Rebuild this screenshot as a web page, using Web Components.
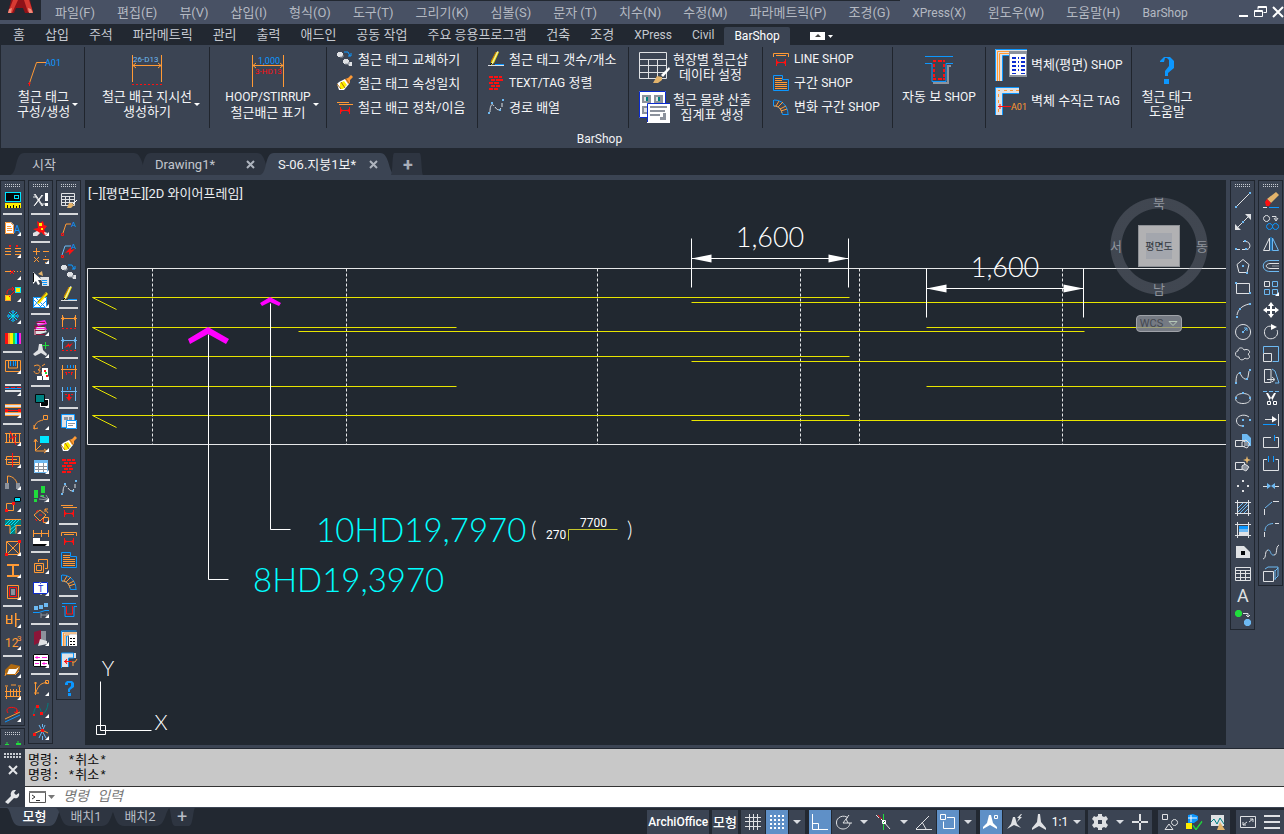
<!DOCTYPE html>
<html lang="ko">
<head>
<meta charset="utf-8">
<title>BarShop</title>
<style>
    :root {
        --panel: #3b4453;
        --dark: #222831;
        --tab: #2e3541;
        --text: #d9dce1;
        --active: #5f90c7;
    }
    html, body { height: 100%; }
    body {
        margin: 0;
        display: flex;
        flex-direction: column;
        overflow: hidden;
        background: var(--dark);
        color: var(--text);
        font: 13px/15px Roboto, "Noto Sans CJK KR", sans-serif;
    }
    .latin { font-size: 12px; }
    .file-tabs {
        display: flex;
        height: 22px;
        padding: 5px 0 0 16px;
        border-bottom: 5px solid var(--panel);
    }
    main {
        flex: 1;
        min-height: 0;
        display: flex;
        background: var(--panel);
        border-bottom: 3px solid var(--panel);
    }
    .dock { display: flex; gap: 3px; padding-right: 4px; }
    .dock > div { display: flex; flex-direction: column; gap: 2px; overflow: hidden; }
    .dock.right { padding: 0 1px 0 4px; }
    drawing-canvas { flex: 1; min-width: 0; }
    footer {
        display: flex;
        justify-content: space-between;
        height: 26px;
        border-top: 1px solid var(--panel);
    }
    .layouts { display: flex; padding-left: 10px; }
</style>
</head>
<body>
<menu-bar></menu-bar>

<ribbon-tabs active="BarShop">홈,삽입,주석,파라메트릭,관리,출력,애드인,공동 작업,주요 응용프로그램,건축,조경,XPress,Civil,BarShop</ribbon-tabs>

<ribbon-bar title-text="BarShop">
    <ribbon-group><ribbon-button size="large" icon="L-tag" menu>철근 태그<br>구성/생성</ribbon-button></ribbon-group>
    <ribbon-group><ribbon-button size="large" icon="L-leader" menu>철근 배근 지시선<br>생성하기</ribbon-button></ribbon-group>
    <ribbon-group><ribbon-button size="large" icon="L-hoop" menu><span class="latin">HOOP/STIRRUP</span><br>철근배근 표기</ribbon-button></ribbon-group>
    <ribbon-group>
        <ribbon-button icon="swap">철근 태그 교체하기</ribbon-button>
        <ribbon-button icon="brush">철근 태그 속성일치</ribbon-button>
        <ribbon-button icon="lap">철근 배근 정착/이음</ribbon-button>
    </ribbon-group>
    <ribbon-group>
        <ribbon-button icon="pencil">철근 태그 갯수/개소</ribbon-button>
        <ribbon-button icon="bricks"><span class="latin">TEXT/TAG</span> 정렬</ribbon-button>
        <ribbon-button icon="route">경로 배열</ribbon-button>
    </ribbon-group>
    <ribbon-group>
        <ribbon-button size="medium" icon="L-table">현장별 철근샵<br>데이타 설정</ribbon-button>
        <ribbon-button size="medium" icon="L-sheet">철근 물량 산출<br>집계표 생성</ribbon-button>
    </ribbon-group>
    <ribbon-group>
        <ribbon-button icon="line"><span class="latin">LINE SHOP</span></ribbon-button>
        <ribbon-button icon="section">구간 <span class="latin">SHOP</span></ribbon-button>
        <ribbon-button icon="fan">변화 구간 <span class="latin">SHOP</span></ribbon-button>
    </ribbon-group>
    <ribbon-group><ribbon-button size="large" icon="L-beam">자동 보 <span class="latin">SHOP</span></ribbon-button></ribbon-group>
    <ribbon-group>
        <ribbon-button size="wide" icon="L-wall">벽체(평면) <span class="latin">SHOP</span></ribbon-button>
        <ribbon-button size="wide" icon="L-wall-tag">벽체 수직근 <span class="latin">TAG</span></ribbon-button>
    </ribbon-group>
    <ribbon-group><ribbon-button size="large" icon="L-help">철근 태그<br>도움말</ribbon-button></ribbon-group>
</ribbon-bar>

<nav class="file-tabs">
    <file-tab>시작</file-tab>
    <file-tab closable>Drawing1*</file-tab>
    <file-tab closable active>S-06.지붕1보*</file-tab>
    <file-tab add>+</file-tab>
</nav>

<main>
    <div class="dock">
        <div>
            <tool-bar>monitor | pageA* break* trim* copyprop* snow* rainbow | slab* band* band2* | hatchcut* slot* door* squares* tee* xbox* ibeam* column* | ba* num* | bed* fence* curves*</tool-bar>
            <tool-bar>trees</tool-bar>
        </div>
        <div>
            <tool-bar>xref | explode* | math* select note* | books* addA* puzzle* | layers* curveleader* axes* sheet* | steps* rotate* dimwall* | group* book* hedge* | door3d* plan* | curve* spline* cross*</tool-bar>
        </div>
        <div>
            <tool-bar>tablebrush | tag tagred swap pencil | dim dimred | dimblue dimdown | report brush bricks route lap | line section fan | beam | wall walltag | help</tool-bar>
        </div>
    </div>
    <drawing-canvas></drawing-canvas>
    <div class="dock right">
        <div><tool-bar>a-line a-xline a-pline a-polygon a-rect a-arc a-circle a-cloud a-spline a-ellipse a-ellarc a-insert a-block a-point a-hatch a-gradient a-region a-table a-text a-addsel</tool-bar></div>
        <div><tool-bar>m-erase m-copy m-mirror m-offset m-array* m-move m-rotate m-scale m-stretch m-trim m-extend m-breakat m-break m-join m-chamfer m-fillet m-blend m-explode</tool-bar></div>
    </div>
</main>

<command-line></command-line>

<footer>
    <nav class="layouts">
        <layout-tab active>모형</layout-tab>
        <layout-tab>배치1</layout-tab>
        <layout-tab>배치2</layout-tab>
        <layout-tab add>+</layout-tab>
    </nav>
    <status-bar></status-bar>
</footer>

<script>
// Icon parts: "key:path" strings. Lower-case key strokes, upper-case key fills.
// "key@x,y,size:text" puts a text in the icon.
const COLORS = {
    o: '#ff9a35', r: '#ff1010', b: '#6db9f2', z: '#0c97ff', w: '#dfe1e4', c: '#00e5ff',
    k: '#05070a', g: '#20dd3c', y: '#ffee00', m: '#ff22dd', n: '#8c929c', t: '#008080',
    d: '#0b2bd0', p: '#e2b36b', x: '#ffffff', s: '#b06a10', u: '#8b1538'
};

const ICONS = {
    // left dock, first bar
    monitor: 'C:M0 0h16v10h-16z|K:M1 1h14v8h-14z|C:M9 3h5v4h-5z|K:M10 4h3v2h-3z|Y:M0 11h16v5h-16z|k:M2.5 13v3M5.5 14v2M8.5 13v3M11.5 14v2M14.5 13v3',
    pageA: 'X:M0 2h6l3 3v9h-9z|o:M.5 2.5h5l3 3v8h-8zM2 6.5h4M2 8.5h5M2 10.5h5|z@9,13,10:A',
    break: 'o:M0 6.5h6M10 6.5h6M0 9.5h6M10 9.5h6M0 12.5h6M10 12.5h6|r:M4 3l2 2M6 3l-2 2M11 3l2 2M13 3l-2 2',
    trim: 'o:M0 7.5h6M9 7.5h1M12 7.5h1M15 7.5h1|r:M5 6l4 4M9 6l-4 4',
    copyprop: 'Y:M0 9h6v6h-6zM10 1h6v6h-6z|r:M2 8C2 3 4 3 9 3M7 1l2 2l-2 2M4 11l6 -6|o:M0.5 9.5h5v5h-5z|c:M10.5 1.5h5v5h-5z',
    snow: 'c:M8 2v12M2 8h12M4 4l8 8M12 4l-8 8|z:M6 3l2 2l2 -2M6 13l2 -2l2 2M3 6l2 2l-2 2M13 6l-2 2l2 2',
    rainbow: 'R:M0 3h3v11h-3z|O:M3 3h2v11h-2z|Y:M5 3h3v11h-3z|G:M8 3h2v11h-2z|C:M10 3h2v11h-2z|D:M12 3h2v11h-2z|M:M14 3h2v11h-2z',
    slab: 'o:M.5 2.5h15v11h-15zM3.5 3v7h9v-7|z:M5.5 3v5M8.5 3v5M10.5 3v5',
    band: 'W:M0 4h16v2h-16zM0 10h16v2h-16z|z:M0 8.5h16|r:M0 7.5h4M6 7.5h4M12 7.5h4',
    band2: 'W:M0 3h16v2h-16zM0 11h16v2h-16z|o:M0 2.5h16M0 5.5h16M0 10.5h16M0 13.5h16|r:M1 8.5h14|R:M0 7h3v3h-3zM13 7h3v3h-3z',
    hatchcut: 'o:M0 3.5h16M0 12.5h16M1.5 4v8M4.5 4v8M7.5 4v8M10.5 4v8M14.5 4v8|r:M5 1l6 14M4 9l8 -3',
    slot: 'o:M1.5 4.5h13v8h-13zM0 7.5h12M3 10.5h12|r:M7.5 1v14',
    door: 'o:M2.5 10v-8C8 2 12 6 12.5 12|N:M0 9h4v6h-4zM11 9h4v6h-4z',
    squares: 'o:M1.5 7.5h7v7h-7z|C:M9 1h7v5h-7z|k:M9.5 1.5h6v4h-6z|R:M0 13h3v3h-3zM7 6h3v3h-3z',
    tee: 'T:M0 1h16v6h-5v9h-6v-9h-5z|c:M0 7l6 -6M3 7l6 -6M6 7l6 -6M9 7l6 -6M5 12l6 -5M5 16l6 -6|o:M0 1.5h16M0 7.5h5v8M16 7.5h-5v8',
    xbox: 'o:M1.5 1.5h13v13h-13zM2 2l12 12M14 2l-12 12|R:M0 13h3v3h-3zM13 0h3v3h-3z',
    ibeam: 'O:M2 2h12v2h-5v9h5v2h-12v-2h5v-9h-5z',
    column: 'o:M2.5 1.5h11v13h-11z|r:M4.5 3.5h7v9h-7z|N:M6 5h4v6h-4z',
    ba: 'o:M1.5 3v9M6.5 3v9M1 7.5h6M1 11.5h6M10.5 1v14M10 7.5h5M2 3v9M7 3v9M11 1v14',
    num: 'o@0,13,12:12|o@12,7,8:3',
    bed: 'S:M0 8l6 -6l9 2v3l-5 6h-10z|X:M4 7l7 0l3 -2l-4 7h-8z|o:M0 14l1 -3M10 13l4 -4',
    fence: 'o:M1.5 3v12M14.5 3v12M5.5 5v8M8.5 5v8M11.5 5v8M0 7.5h16M0 12.5h16M0 2h3M13 2h3M6 1h5',
    curves: 'r:M3 7C-1 1 8 0 12 3l-1 4M9 6l3 1l1 -3|o:M0 13l15 -7|z:M0 16l15 -7',
    trees: 'G:M0 4h4v4h-4zM11 3h5v5h-5z|o:M2 6h11M2 9v2M13 9v3|g:M2 2v7M13 1v8|z:M0 12.5h11l5 -2',

    // left dock, second bar
    xref: 'w:M1 2l8 12M10 3l-8 10M0 5h4M8 12h4|X:M12 1h3v8h-3zM12 11h3v3h-3z|x:M2 2l8 12M9 3l-8 11',
    explode: 'R:M4 1l3 2l3 -2l1 4l3 1l-3 4l4 5h-4l-3 -3l-4 4l-4 -1l4 -4l-4 -2l5 -1z|Y:M6 3h3v3h-3zM8 8h2v2h-2z|W:M0 13l4 -2l3 2l-3 3h-4zM11 12l4 1l-3 2z',
    math: 'o:M0 3.5h7M3.5 0v7M10 3.5h6M1 9l5 5M6 9l-5 5M10 11.5h6M12.5 8v1M12.5 14v1',
    select: 'P:M5 4l4 -3l1 5z|X:M0 2v12l3 -3l2 4l2 -1l-2 -4h4z|W:M7 7h9v9h-7v-4z|z:M9 10.5h5M9 12.5h5M10 14.5h4|k:M.5 3v9',
    note: 'X:M0 5h14v11h-14z|z:M0 7l8 8M3 6l9 9M14 8l-7 7M8 6l-7 8M.5 5.5h13v10h-13z|Y:M13 0l2 2l-8 9l-3 1l1 -3z|s:M13 1l-8 9',
    books: 'M:M3 2l9 -2l2 4l-9 2zM2 6h10l2 4h-11z|W:M1 9h10l3 3l-10 3h-3z|W:M4 3l7 -1l1 1l-7 1zM4 7h7l1 1h-8z|u:M3 2.5h9M2 6.5h10M2 10.5h10M3 14.5h9|u:M2 5v10',
    addA: 'W:M6 2h3l1 6l4 4l-1 2l-5 -3l-6 3l-2 -2l5 -4z|g:M12.5 0v7M9 3.5h7',
    puzzle: 'o:M1 2c6 -3 8 2 4 4h2c0 5 -6 4 -6 1M9 2l3 -2M8 9h3|X:M9 4h6v12h-6zM4 12h6v4h-6z|R:M11 6h2v2h-2zM13 11h2v2h-2z|G:M12 8h2v2h-2z',
    layers: 'X:M7 7h9v8h-9z|K:M8 8h7v6h-7z|T:M2 2h10v9h-10z|k:M2.5 2.5h9v8h-9z',
    curveleader: 'o:M1 15C2 8 6 7 10 6M1 11v4l4 -1|o:M10.5 1.5h4v4h-4z',
    axes: 'C:M7 0h9v7h-9z|o:M2.5 4v11h11M1 6l1.5 -3l2 3M11 13l3 2l-3 2M3 14l5 -5',
    sheet: 'X:M1 2h14v13h-14z|B:M1 2h14v3h-14z|n:M1 8.5h14M1 11.5h14M5.5 5v10M10.5 5v10|b:M1.5 2.5h13v12h-13z',
    steps: 'G:M1 4h4v8h-4zM8 0h4v7h-4zM1 13h3v3h-3zM8 9h3v2h-3z|n:M7 10l8 3M6 13l9 1M13 9l3 5l-5 2',
    rotate: 'o:M1 7l6 -5l6 5l-6 6zM10.5 9.5h5v5h-5zM15 5l-3 -4M12 4v-3h3|r:M3 4l2 -2M2 11l2 2M6 7h3M10 11v3',
    dimwall: 'o:M0 3.5h16M.5 0v7M8.5 0v7M15.5 0v7|X:M0 8h7v3h9v5h-16z|K:M0 14h16v2h-16z',
    group: 'o:M1.5 5.5h9v9h-9zM3.5 7.5h5v5h-5z|o:M5.500 4V1.500H14.500V10.500H12',
    book: 'X:M1 2h6l1 1l1 -1h6v12h-6l-1 1l-1 -1h-6z|d:M.5 2.5h6l1 1l1 -1h6v11h-14z|d@5,12,9:T',
    hedge: 'B:M1 4h4v4h-4zM6 3h4v4h-4zM11 1h4v4h-4z|z:M0 10.5h6l6 -2h4|n:M8 11v5M14 11v5M8 13h6',
    door3d: 'N:M6 1h7v11h-7z|U:M1 2l7 -2v12l-7 3z|W:M7 9l7 2v3l-9 2z',
    plan: 'X:M0 2h16v13h-16z|k:M.5 2.5h15v12h-15zM0 8.5h16M7.5 8v7|m:M2 5.5h5M9 5.5h5M2 11.5h4M9 11.5h5M4 4v3M11 10v3',
    curve: 'o:M2.5 2v13M1 3h3M1 13h5M3 12C6 4 9 3 14 2.5M12.5 .5h3v3h-3z',
    spline: 't:M0 13C4 -2 6 4 8 9C10 15 15 7 15 1|R:M3 3h3v3h-3zM7 10h3v3h-3zM0 12h2v2h-2z',
    cross: 'b:M6 1l7 13M12 1l-6 13M9.5 0v3M9.5 12v4|o:M0 10l9 -4l6 3|R:M0 9h3v3h-3zM8 5h3v3h-3z',

    // bar shop icons, shared with the ribbon
    tablebrush: 'w:M.5 1.5h13v12h-13zM1 4.5h12M1 7.5h12M1 10.5h12M4.5 4v9M8.5 4v9|P:M8 11l3 0l2 2l-3 3l-4 0z|x:M12 12l4 -4',
    tag: 'o:M2 13l3 -9h5|z@10,7,8:A|r:M.5 13.5h2v2h-2z',
    tagred: 'b:M1 13l3 -9h6|z@10,7,8:A|R:M4 11l6 -6v3l4 -1l-6 6v-3z|r:M.5 13.5h2v2h-2z',
    swap: 'W:M1 1h4v1h1v3h-1v1h-4v-1h-1v-3h1zM7 8h4v1h1v3h-1v1h-4v-1h-1v-3h1zM12 11h3v4h-3l-1 -2z|z:M7 1h4l2 4M11 5h3v-3|n:M3 6h3v-2M8 13h4v-2',
    brush: 'X:M2 7l6 -3l4 5l-5 6h-5l-2 -6z|Y:M3 8l4 -2l3 4l-4 4h-3z|O:M8 4l3 -1l3 -3l2 2l-3 3v3l-2 1z|s:M0 9l4 5M4 7l4 6M9 4l3 4',
    lap: 'o:M0 3.5h12M2 5.5h14|r:M3.5 8v7M12.5 8v7M4 11.5h9M5 10l-1 1.5l1 1.5M11 10l1 1.5l-1 1.5',
    pencil: 'Y:M8 1l3 0l-5 11l-3 2v-4z|s:M8 1l-5 10|w:M10 0l-6 13|Z:M7 13h9v2h-9z|w:M0 14.5h16|k:M2 14l2 -2',
    bricks: 'R:M1 1h4v2h-4zM6 1h4v2h-4zM11 1h3v2h-3zM3 4h4v2h-4zM8 4h7v2h-7zM1 7h4v2h-4zM6 7h5v2h-5zM3 10h4v2h-4zM8 10h4v2h-4zM1 13h4v2h-4zM6 13h4v2h-4z',
    route: 'w:M2 13C2 6 4 4 6 7|w:M7 8C9 11 11 12 13 9M14 8v-4|B:M0 13h2v2h-2zM3 3h2v2h-2zM11 10h2v2h-2zM14 0h2v2h-2z',
    dim: 'o:M1.5 1v12M14.5 1v12M0 4.5h16M3 3l-2 1.5l2 1.5M13 3l2 1.5l-2 1.5|r:M1 14.5h2M5 14.5h2M9 14.5h2M13 14.5h2',
    dimred: 'b:M1.5 1v12M14.5 1v12M0 4.5h16M3 3l-2 1.5l2 1.5M13 3l2 1.5l-2 1.5|R:M3 12l5 -5v2l4 -2l-4 5v-2z|r:M1 14.5h2M5 14.5h2M9 14.5h2M13 14.5h2',
    dimblue: 'o:M1.5 1v14M14.5 1v14M0 5.5h16|z:M6.5 1v3M9.5 1v3M12.5 1v3|r:M4 8.5h2M7 8.5h2M10 8.5h2M5.5 8v3M10.5 8v3',
    dimdown: 'b:M1.5 1v14M14.5 1v14M0 5.5h16|z:M6.5 1v3M9.5 1v3|r:M4 8.5h2M7 8.5h2M10 8.5h2|R:M7 9h2v2h2l-3 4l-3 -4h2z',
    report: 'W:M1 0h12v14h-12z|z:M.5 .5h13v13h-13z|N:M3 3h4v3h-4zM8 3h3v3h-3z|X:M5 6h11v9h-11z|z:M5.5 6.5h10v8h-10z|n:M7 9.5h7M7 11.5h5',
    line: 'o:M.5 6v-3.5h15v3.5|o:M3 4.5h10|r:M3.5 8v7M12.5 8v7M4 11.5h9M5 10l-1 1.5l1 1.5M11 10l1 1.5l-1 1.5',
    section: 'z:M.5 .5h9v4h6v11h-15z|o:M2 3.5h7M2 5.5h7M2 7.5h12M2 9.5h12M2 11.5h12M2 13.5h12',
    fan: 'z:M1 1C10 1 15 8 15 15.5M.5 1v6c6 0 8 4 9 8.5h6|o:M3 7l3 -5M5 8l5 -5M7 10l6 -3M8 12l6 -2M1 7C6 7 8 10 9 14',
    beam: 'z:M1 1.5h14M1 4.5h3v10h9v-10h3|r:M5.5 4v8h6v-8',
    wall: 'W:M1 2h15v4h-9v10h-6z|z:M.5 16v-15h15M5.5 16v-10h3|o:M2.5 16v-13h13M4 16v-11h5|X:M8 5h8v11h-8z|k:M9 8.5h2M12 8.5h2M9 11.5h2M12 11.5h2M9 14.5h2M12 14.5h2',
    walltag: 'W:M1 1h14v5h-8v9h-6z|z:M.5 16v-15h12v5h-5v9|r:M3 9.5h8M6 7l-2 2.5l2 2.5M5 8v3|o:M11 10h3l2 -3M12 10v4',
    help: 'Z:M4 3l2 -2h5l2 2v4l-4 3v2h-2v-3l3 -3v-3h-3v2h-3zM7 13h3v3h-3z',

    // large ribbon icons, 32 px
    'L-tag': 'o:M1.5 29L8.5 8.5H18|z@17,12,9:A01|r:M0 29.5h2.5M1.5 28v4',
    'L-leader': 'o:M1.5 1v27M30.5 1v27M2 11.5h28M5 9l-3 2.5l3 2.5M27 9l3 2.5l-3 2.5|b@2,8,8:26-D13|r:M1 30.5h2M5 30.5h2M9 30.5h2M13 30.5h2M17 30.5h2M21 30.5h2M25 30.5h2M29 30.5h2',
    'L-hoop': 'o:M.5 1v32M31.5 1v32M1 11.5h30M4 9l-3 2.5l3 2.5M28 9l3 2.5l-3 2.5|z@6,10,9:1,000|r@3,20,8:3-HD13',
    'L-table': 'w:M1.5 1.5h27v26h-27zM2 8.5h26M2 14.5h26M2 21.500h26M10.5 9v18M19.500 9v18|P:M15 32l4 -7l5 1v3l-4 3z|X:M23 24l8 -8l1 2l-7 8z',
    'L-sheet': 'X:M1 0h27v27h-27z|d:M1.5 .5h26v26h-26z|N:M4 4h9v8h-9zM16 4h9v8h-9zM4 15h9v8h-9z|W:M6 6h4v4h-4zM18 6h4v4h-4zM6 17h4v4h-4z|T:M8 6h2v4h-2zM20 6h2v4h-2z|X:M9 12h23v20h-23z|d:M9.5 31V12.5H32|N:M12 15h17v2h-17zM12 19h15v2h-15zM12 23h10v2h-10zM22 26h3v-4h3v7h-6z',
    'L-beam': 'z:M2 2.5h28M2 9.5h7v18h14v-18h7|N:M24 11h4v2h-2v17h-16v-2h14z|R:M10 6h3v2h-3zM15 6h4v2h-4zM20 6h2v2h-2zM10 10h2v3h-2zM20 10h2v3h-2zM10 15h2v3h-2zM20 15h2v3h-2zM10 20h2v3h-2zM20 20h2v3h-2zM10 24h3v2h-3zM15 24h4v2h-4zM20 24h2v2h-2z',
    'L-wall': 'W:M0 0h32v6h-24v26h-8z|z:M.5 32V.5H32M7.5 32V6.5H14|o:M2.5 32V2.5H14M4.5 32V4.5H14|N:M14 2h18v26h-18z|X:M15 5h16v21h-16z|D:M17 8h4v2h-4zM23 8h1v2h-1zM26 8h4v2h-4zM17 12h4v2h-4zM23 12h1v2h-1zM26 12h4v2h-4zM17 16h4v2h-4zM23 16h1v2h-1zM26 16h4v2h-4zM17 20h4v2h-4zM23 20h1v2h-1zM26 20h4v2h-4zM17 24h4v1h-4zM26 24h4v1h-4z',
    'L-wall-tag': 'W:M1 2h23v6h-16v22h-7z|z:M.5 30V2.5H24M7.5 30V8.5H24|o:M3 5.5h2M9 5.5h3M15 5.5h3M21 5.5h3M3.5 9v3M3.5 15v3M3.5 24v3|r:M3 21.5h13M5 19v5|o@16,25,9:A01',
    'L-help': 'Z:M9 7l4 -4h6l4 4v7l-6 5v3h-3v-5l4 -5v-6l-2 -2h-2l-1 4h-4zM13 25h5v5h-5z',

    // draw
    'a-line': 'w:M2 14l12 -12|B:M0 14h2v2h-2zM14 0h2v2h-2z',
    'a-xline': 'w:M3 13l10 -10|W:M0 16v-6l6 6zM16 0v6l-6 -6z|B:M7 7h2v2h-2z',
    'a-pline': 'w:M1 13.5h4M7 13.5h3M8 5.5h3C16 6 16 13 12 13.5|B:M0 12h2v2h-2zM10 12h2v2h-2zM9 4h2v2h-2z',
    'a-polygon': 'w:M8 1.5l6 5l-2 8h-8l-2 -8z|B:M7 7h2v2h-2zM11 14h2v2h-2z',
    'a-rect': 'w:M1.5 3.5h13v10h-13z|B:M0 2h2v2h-2zM14 12h2v2h-2z',
    'a-arc': 'w:M2 13C3 8 6 4 14 2|B:M1 14h2v2h-2zM4 6h2v2h-2zM14 1h2v2h-2z',
    'a-circle': 'w:M8 .5a7.5 7.5 0 1 0 .1 0z|b:M8 8l4 -4M9 4h3v3|B:M7 7h2v2h-2z',
    'a-cloud': 'w:M3 5C3 1 8 1 9 4C13 2 17 6 13 8C17 12 12 14 10 12C8 15 4 14 4 11C-1 11 0 5 3 5z',
    'a-spline': 'w:M1 14C1 6 4 3 6 7S12 13 13 9L14 3|B:M0 14h2v2h-2zM4 4h2v2h-2zM11 10h2v2h-2zM14 1h2v2h-2z',
    'a-ellipse': 'w:M8 3.5C18 3.5 18 13.5 8 13.5S-2 3.5 8 3.5z|B:M0 7h2v2h-2zM14 7h2v2h-2zM7 2h2v2h-2z',
    'a-ellarc': 'w:M14 5C9 1 1 4 1.5 9C2 13 5 14 8 14|B:M7 7h2v2h-2zM14 7h2v2h-2zM7 13h2v2h-2z',
    'a-insert': 'w:M.5 6.5h9v6h-9z|B:M7 0h5l4 4v8h-6v-6h-3z|N:M9 8h4v4h-4z|w:M7 8l4 -2l4 4l-3 4l-5 -2z',
    'a-block': 'w:M.5 6.5h9v7h-9z|N:M7 9h6v5h-6z|w:M7 10l3 -2l4 3l-3 4l-4 -2z|P:M12 0l1 3l3 1l-3 1l-1 3l-1 -3l-3 -1l3 -1z',
    'a-point': 'W:M7 2h2v2h-2zM2 7h2v2h-2zM12 7h2v2h-2zM7 12h2v2h-2z',
    'a-hatch': 'w:M2.5 0v16M13.5 0v16M0 2.5h16M0 13.5h16|b:M3 8l5 -5M3 12l9 -9M5 13l8 -8M9 13l4 -4',
    'a-gradient': 'w:M2.5 0v16M13.5 0v16M0 2.5h16M0 13.5h16|Z:M4 4h9v3h-9z|B:M4 7h9v3h-9z|W:M4 10h9v3h-9z',
    'a-region': 'W:M1 2h8l6 6v6h-14z|K:M6 7h4v4h-4z',
    'a-table': 'w:M.5 1.5h15v13h-15zM0 4.5h16M0 7.5h16M0 11.5h16M5.5 5v9M10.5 5v9',
    'a-text': 'w@2,14,18:A',
    'a-addsel': 'G:M2 0h3l2 2v3l-2 2h-3l-2 -2v-3z|w:M8 3.5h5v3M11 5l2 2l2 -2|B:M11 9h3l2 2v3l-2 2h-3l-2 -2v-3z',

    // modify
    'm-erase': 'P:M13 0l3 3l-8 8l-4 -4z|R:M4 7l4 4l-2 3h-3l-1 -4z|w:M0 15.5h4|z:M6 15.5h10',
    'm-copy': 'w:M3.5 1.5a3 3 0 1 0 .1 0zM9 2.5h4v3M11 4l2 3l2 -3|z:M6.5 9.5a3 3 0 1 0 .1 0zM12.5 9.5a3 3 0 1 0 .1 0z',
    'm-mirror': 'w:M6.5 2v12.5h-6z|b:M9.5 2v12.5h6z|z:M8 1v14',
    'm-offset': 'b:M16 2.5h-9C-2 2.5 -2 13.5 7 13.5h9|w:M16 5.5h-9C2 6 2 10 7 10.5h9|n:M16 8h-7',
    'm-array': 'w:M1.5 1.5h5v5h-5z|b:M9.5 1.5h5v5h-5zM1.5 9.5h5v5h-5zM9.5 9.5h5v5h-5z',
    'm-move': 'X:M8 0l3 4h-2v3h3v-2l4 3l-4 3v-2h-3v3h2l-3 4l-3 -4h2v-3h-3v2l-4 -3l4 -3v2h3v-3h-2z',
    'm-rotate': 'w:M9 2.5C4 1 1 5 1.5 9C2 14 7 16 11 14C15 12 15 8 14 6|X:M8 0l6 3l-6 3z',
    'm-scale': 'b:M.5 7v-6.5h15v15h-6|w:M.5 7.5h8v8h-8z',
    'm-stretch': 'w:M8 1.5h-6.5v13h6.5zM4 11.5h7M9 9l3 2.5l-3 2.5|b:M9 1l3 2l4 12h-4',
    'm-trim': 'b:M0 1.5h4M6 1.5h4M12 1.5h4|X:M3 3l2 0l5 8h-3zM13 3h-2l-5 8h3z|x:M4.500 11.500h3v3h-3zM10.500 11.500h3v3h-3z',
    'm-extend': 'w:M15.5 2v12M2 7.5h9|X:M9 4l5 3.5l-5 3z|z:M0 12.5h13',
    'm-breakat': 'w:M8 3.5h-7.5v10h15v-10h-3|z:M11.5 1v6',
    'm-break': 'w:M4 3.5h-3.5v11h15v-11h-3|z:M5.5 0v6M10.5 0v6',
    'm-join': 'w:M0 8.5h5M11 8.5h5|B:M4 5l4 3l-4 3zM12 5l-4 3l4 3z',
    'm-chamfer': 'w:M1.5 15v-6M10 1.5h6|b:M2 8l7 -6',
    'm-fillet': 'w:M1.5 15v-5M12 1.5h4|b:M2 9C2 4 5 2 10 1.5',
    'm-blend': 'w:M0 15C4 14 1 7 5 6M11 11C15 11 12 3 16 1|b:M5 6C8 5 7 12 11 11',
    'm-explode': 'w:M.5 5.5h10v10h-10z|b:M2 3l3 -2h10v9l-3 3M12 5l3 -3M12 4v10',

    // status bar
    's-grid': 'w:M4.5 0v16M8.5 0v16M0 3.5h16M0 7.5h16M0 12.5h16M12.5 0v16',
    's-snap': 'X:M1 1h2v2h-2zM5 1h2v2h-2zM9 1h2v2h-2zM13 1h2v2h-2zM1 5h2v2h-2zM5 5h2v2h-2zM9 5h2v2h-2zM13 5h2v2h-2zM1 9h2v2h-2zM5 9h2v2h-2zM9 9h2v2h-2zM13 9h2v2h-2zM1 13h2v2h-2zM5 13h2v2h-2zM9 13h2v2h-2zM13 13h2v2h-2z',
    's-ortho': 'x:M.5 0v15.5h15.5M.5 9.5h6v6',
    's-polar': 'w:M12 4C8 0 0 3 .5 9C1 17 13 17 14 9M7 9h9M7 9l6 -8M10 5l2 4',
    's-iso': 'r:M2 1l5 6|w:M7 7l7 8M0 1l3 3|g:M7.5 0v16|x:M5 5l5 5M6.5 6.5h3v3h-3z',
    's-track': 'w:M0 15.5h16M0 15l13 -13M6 8l4 7',
    's-osnap': 'x:M7 3.5h7.5v11h-11v-7M.5 .5h5v5h-5z',
    's-ann': 'X:M6 1h2l2 8l4 4v2l-7 -4l-7 4v-2l4 -4z|x:M11.5 1.5h3v3h-3z',
    's-annauto': 'W:M6 3h2l2 7l4 4l-7 -3l-7 4l4 -5zM14 0l-4 4h2l-2 4l5 -5h-2l2 -3z',
    's-annscale': 'W:M7 0h2l1 8l5 6v2l-7 -4l-7 4v-2l5 -6z',
    's-gear': 'W:M6 0h4v2l2 1l2 -1l2 3l-2 2v2l2 2l-2 3l-2 -1l-2 1v2h-4v-2l-2 -1l-2 1l-2 -3l2 -2v-2l-2 -2l2 -3l2 1l2 -1zM6 6v4h4v-4z',
    's-plus': 'W:M7 0h2v16h-2zM0 7h16v2h-16z',
    's-iso2': 'w:M.5 .5h5v5h-5zM12.5 5.5a3 3 0 1 0 .1 0zM7 10l4 5.5h-8z',
    's-hw': 'Z:M2 1l5 -1l5 2v4l-4 3h-6z|x:M2 4h9M5 1v7|Y:M0 9h6v6h-6z|g:M7 11l3 4l6 -8M7 12l3 4l6 -8',
    's-clean': 'W:M1 1h13v11h-13z|t:M1 8l3 -3l3 5l3 -6l4 6|P:M10 8l5 8h-8z',
    's-full': 'w:M.5 2.5h15v11h-15zM9 8l4 -3M10 5h3v3M7 8l-4 3M3 8v3h3',
    's-menu': 'W:M0 1h16v2h-16zM0 7h16v2h-16zM0 13h16v2h-16z'
};

function iconSvg(name, flyout) {
    const side = name.startsWith('L-') ? 32 : 16;
    let body = '';
    for (const part of (ICONS[name] || '').split('|')) {
        const at = part.indexOf(':');
        const head = part.slice(0, at);
        const data = part.slice(at + 1);
        const key = head[0];
        const color = COLORS[key.toLowerCase()];
        if (head[1] === '@') {
            const [x, y, size] = head.slice(2).split(',');
            body += `<text x="${x}" y="${y}" font-size="${size}" fill="${color}">${data}</text>`;
        } else if (key === key.toUpperCase()) {
            body += `<path fill="${color}" fill-rule="evenodd" d="${data}"/>`;
        } else {
            body += `<path fill="none" stroke="${color}" d="${data}"/>`;
        }
    }
    if (flyout) body += '<path fill="#fff" d="M16 12v4h-4z"/>';
    return `<svg width="${side}" height="${side}" viewBox="0 0 ${side} ${side}" aria-hidden="true">${body}</svg>`;
}

class CadIcon extends HTMLElement {
    constructor() {
        super();
        this.attachShadow({ mode: 'open' });
    }
    connectedCallback() {
        this.shadowRoot.innerHTML = `
            <style>
                :host { display: block; flex: none; }
                svg { display: block; overflow: visible; font-family: Roboto, sans-serif; }
            </style>
            ${iconSvg(this.getAttribute('name'), this.hasAttribute('flyout'))}
        `;
    }
}
customElements.define('cad-icon', CadIcon);

class MenuBar extends HTMLElement {
    constructor() {
        super();
        const menus = ['파일(F)', '편집(E)', '뷰(V)', '삽입(I)', '형식(O)', '도구(T)', '그리기(K)', '심볼(S)',
            '문자 (T)', '치수(N)', '수정(M)', '파라메트릭(P)', '조경(G)', 'XPress(X)', '윈도우(W)', '도움말(H)', 'BarShop'];
        this.attachShadow({ mode: 'open' }).innerHTML = `
            <style>
                :host {
                    display: flex;
                    height: 24px;
                    background: linear-gradient(90deg, #485164 310px, var(--dark) 310px 900px, #485164 900px) 0 0 / 100% 1px no-repeat, #485164;
                }
                .logo { width: 41px; height: 20px; background: var(--dark); }
                nav { flex: 1; display: flex; gap: 22px; padding: 2px 0 0 14px; }
                button {
                    all: unset;
                    color: #b4b9c2;
                    white-space: pre;
                    line-height: 22px;
                }
                .latin { font-size: 12px; }
                .win { display: flex; align-items: center; gap: 4px; padding-top: 4px; }
            </style>
            <svg class="logo" viewBox="0 0 41 20" role="img" aria-label="AutoCAD">
                <path fill="#8f1218" d="M11 0h19l3 13h-8l-2 -5h-7l-2 5h-6z"/>
                <path fill="#d83a32" d="M13 0h5l-6 13h-4zM24 0h5l4 12h-5z"/>
                <path fill="#f28a7a" d="M9 9l3 -1l-1 5h-3zM28 8l3 1l2 4h-4z"/>
            </svg>
            <nav>${menus.map(m => `<button class="${/[가-힣]/.test(m) ? '' : 'latin'}">${m}</button>`).join('')}</nav>
            <div class="win">
                <button aria-label="최소화"><svg width="12" height="12"><path fill="#fff" d="M1 9h9v2h-9z"/></svg></button>
                <button aria-label="복원"><svg width="14" height="12"><path fill="none" stroke="#fff" d="M4 3.5V.5h8.5v6h-3M.5 4.5h8v6h-8zM4 1.5h8M1 5.5h7"/></svg></button>
                <button aria-label="닫기"><svg width="12" height="12"><path stroke="#fff" stroke-width="2" d="M1 1l10 10M11 1l-10 10"/></svg></button>
            </div>
        `;
    }
}
customElements.define('menu-bar', MenuBar);

class RibbonTabs extends HTMLElement {
    constructor() {
        super();
        this.attachShadow({ mode: 'open' });
    }
    connectedCallback() {
        const active = this.getAttribute('active');
        const tabs = this.textContent.trim().split(',').map(t => {
            const cls = (t === active ? 'on ' : '') + (/[가-힣]/.test(t) ? '' : 'latin');
            return `<button role="tab" class="${cls}">${t}</button>`;
        }).join('');
        this.shadowRoot.innerHTML = `
            <style>
                :host {
                    display: flex;
                    align-items: flex-end;
                    height: 21px;
                    padding-left: 3px;
                    background: var(--dark);
                }
                button { all: unset; padding: 0 10px; color: #c5c9d0; line-height: 20px; }
                .latin { font-size: 12px; }
                .on { background: var(--panel); color: #fff; border-radius: 2px 2px 0 0; line-height: 18px; }
                .collapse { padding: 0 0 5px 20px; }
                svg { display: block; }
            </style>
            ${tabs}
            <button class="collapse" aria-label="리본 최소화">
                <svg width="26" height="9"><path fill="#fff" d="M0 1h15v8h-15z"/><path fill="#444" d="M5 6l3 -3l3 3z"/><path fill="#fff" d="M18 4h5l-2.5 3z"/></svg>
            </button>
        `;
    }
}
customElements.define('ribbon-tabs', RibbonTabs);

class RibbonBar extends HTMLElement {
    constructor() {
        super();
        this.attachShadow({ mode: 'open' });
    }
    connectedCallback() {
        this.shadowRoot.innerHTML = `
            <style>
                :host { display: block; background: var(--panel); padding: 2px 0 0 2px; border-left: 1px solid var(--dark); }
                .panel { display: inline-block; vertical-align: top; }
                .groups {
                    display: grid;
                    grid-template-columns: 82px 125px 117px 151px 151px 134px 130px 93px 146px 70px;
                    height: 81px;
                }
                .title { height: 20px; padding-right: 6px; line-height: 22px; font-size: 12px; text-align: center; color: #f2f3f5; }
            </style>
            <div class="panel">
                <div class="groups"><slot></slot></div>
                <div class="title">${this.getAttribute('title-text')}</div>
            </div>
        `;
    }
}
customElements.define('ribbon-bar', RibbonBar);

class RibbonGroup extends HTMLElement {
    constructor() {
        super();
        this.attachShadow({ mode: 'open' }).innerHTML = `
            <style>
                :host { display: block; box-sizing: border-box; border-right: 1px solid #20252d; }
                :host(:last-child) { border-right: 0; }
            </style>
            <slot></slot>
        `;
    }
}
customElements.define('ribbon-group', RibbonGroup);

class RibbonButton extends HTMLElement {
    constructor() {
        super();
        this.attachShadow({ mode: 'open' });
    }
    connectedCallback() {
        this.shadowRoot.innerHTML = `
            <style>
                :host { display: block; color: #f4f5f7; }
                button { all: unset; display: flex; align-items: center; height: 24px; padding-left: 10px; gap: 5px; white-space: nowrap; }
                :host([size="large"]) button {
                    display: grid;
                    grid-template-columns: 8px auto 8px;
                    justify-content: center;
                    justify-items: center;
                    gap: 3px 0;
                    width: 100%;
                    height: auto;
                    padding: 7px 0 0;
                    text-align: center;
                }
                :host([size="large"]) cad-icon { grid-column: 1 / 4; }
                :host([size="large"]) .label { grid-column: 2; }
                :host([size="medium"]) button { height: 40px; padding-left: 9px; gap: 3px; text-align: center; }
                :host([size="wide"]) button { height: 36px; padding-left: 9px; gap: 4px; }
                .arrow { display: none; align-self: center; justify-self: end; border: 3px solid transparent; border-top-color: #fff; border-bottom: 0; }
                :host([menu]) .arrow { display: block; }
            </style>
            <button>
                <cad-icon name="${this.getAttribute('icon')}"></cad-icon>
                <span class="label"><slot></slot></span>
                <span class="arrow"></span>
            </button>
        `;
    }
}
customElements.define('ribbon-button', RibbonButton);

class FileTab extends HTMLElement {
    constructor() {
        super();
        this.attachShadow({ mode: 'open' });
    }
    connectedCallback() {
        const close = this.hasAttribute('closable')
            ? '<button class="close" aria-label="닫기"><svg width="9" height="9"><path stroke="#aeb4be" stroke-width="2" d="M1 1l7 7M8 1l-7 7"/></svg></button>'
            : '';
        this.shadowRoot.innerHTML = `
            <style>
                :host {
                    position: relative;
                    display: flex;
                    align-items: center;
                    justify-content: space-between;
                    box-sizing: border-box;
                    width: 123px;
                    padding: 0 11px 0 12px;
                    color: #c2c6ce;
                    --fill: var(--tab);
                }
                :host(:first-child) { width: 127px; padding-left: 16px; }
                :host([active]) { color: #f1f2f4; --fill: var(--panel); }
                :host([add]) { width: 20px; margin: 0 8px; padding: 0 0 0 6px; font-size: 18px; font-weight: bold; color: #a9aeb8; }
                .shape { position: absolute; inset: 0 -6px 0 -6px; width: calc(100% + 12px); height: 22px; }
                button { all: unset; position: relative; }
                .close svg { display: block; }
            </style>
            <svg class="shape" viewBox="0 0 135 22" preserveAspectRatio="none"><path fill="var(--fill)" d="M0 22C8 20 4 0 14 0H120C130 0 128 20 135 22z"/></svg>
            <button role="tab"><slot></slot></button>
            ${close}
        `;
    }
}
customElements.define('file-tab', FileTab);

// Vertical tool palette. "|" is a divider, "*" marks a button with a flyout.
class ToolBar extends HTMLElement {
    constructor() {
        super();
        this.attachShadow({ mode: 'open' });
    }
    connectedCallback() {
        const items = this.textContent.trim().split(/\s+/).map(token => {
            if (token === '|') return '<hr>';
            const name = token.replace('*', '');
            return `<button aria-label="${name}"><cad-icon name="${name}" ${token.endsWith('*') ? 'flyout' : ''}></cad-icon></button>`;
        }).join('');
        this.shadowRoot.innerHTML = `
            <style>
                :host {
                    display: block;
                    flex: none;
                    box-sizing: border-box;
                    width: 25px;
                    border: 1px solid #20262f;
                    background: var(--panel);
                }
                .grip {
                    height: 5px;
                    margin: 0 4px;
                    border-top: 3px solid transparent;
                    background: repeating-linear-gradient(90deg, #c9cdd3 0 1px, transparent 1px 2px) 0 0 / 100% 1px no-repeat,
                                repeating-linear-gradient(90deg, #c9cdd3 0 1px, transparent 1px 2px) 0 2px / 100% 1px no-repeat;
                }
                button { all: unset; display: grid; place-items: center; width: 100%; height: 22px; }
                hr { height: 2px; margin: 2px; border: 0; background: #d6d8db; }
            </style>
            <div class="grip"></div>
            ${items}
        `;
    }
}
customElements.define('tool-bar', ToolBar);

class ViewCube extends HTMLElement {
    constructor() {
        super();
        this.attachShadow({ mode: 'open' }).innerHTML = `
            <style>
                :host { display: grid; justify-items: center; gap: 16px; color: #8f949c; }
                .compass {
                    display: grid;
                    grid-template: "a n b" 20px "w f e" 66px "c s d" 20px / 20px 66px 20px;
                    place-items: center;
                    background: radial-gradient(circle, transparent 37px, #70758266 38px 48px, transparent 49px);
                }
                .n { grid-area: n; }
                .w { grid-area: w; }
                .e { grid-area: e; }
                .s { grid-area: s; }
                button { all: unset; }
                .face {
                    grid-area: f;
                    display: grid;
                    place-items: center;
                    width: 40px;
                    height: 40px;
                    border: 1px solid #8d9095;
                    background: linear-gradient(#a3a6ad, #a3a6ad) center / 26px 26px no-repeat, #b1b1b3;
                    color: #33383f;
                    font-size: 10px;
                }
                .wcs {
                    display: flex;
                    align-items: center;
                    gap: 5px;
                    padding: 0 3px;
                    border: 1px solid #a0a3a9;
                    border-radius: 4px;
                    background: #8b8e98cc;
                    color: #444850;
                    font-size: 11px;
                }
            </style>
            <div class="compass">
                <span class="n">북</span>
                <span class="w">서</span>
                <button class="face">평면도</button>
                <span class="e">동</span>
                <span class="s">남</span>
            </div>
            <button class="wcs">WCS <svg width="10" height="6"><path fill="none" stroke="#b6c8b8" d="M1 .5h8l-4 4z"/></svg></button>
        `;
    }
}
customElements.define('view-cube', ViewCube);

class DrawingCanvas extends HTMLElement {
    constructor() {
        super();
        const line = (x1, y, x2) => `<path d="M${x1} ${y}H${x2}"/>`;
        const hooks = [297, 327, 356, 386, 415].map(y => `<path d="M92 ${y}l24 12"/>`).join('');
        const dim = (x1, x2, y) => `
            <path fill="none" d="M${x1} ${y - 20}V${y + 29}M${x2} ${y - 20}V${y + 29}M${x1} ${y}H${x2}"/>
            <path fill="#fff" stroke="none" d="M${x1} ${y}l20 -4v8zM${x2} ${y}l-20 -4v8z"/>
            <text class="dim" x="${(x1 + x2) / 2}" y="${y - 12}">1,600</text>`;
        this.attachShadow({ mode: 'open' }).innerHTML = `
            <style>
                :host { display: block; position: relative; overflow: hidden; background: #212830; }
                svg.model { display: block; width: 100%; height: 100%; }
                text { stroke: none; fill: #fff; font-family: Lato, sans-serif; }
                .dim { font-size: 27px; font-weight: 300; text-anchor: middle; }
                .tag { font-size: 33px; font-weight: 300; fill: #00ffff; }
                .axis { font-size: 21px; font-weight: 300; text-anchor: middle; }
                .small { font: 12px Roboto, sans-serif; }
                .view { position: absolute; left: 3px; top: 6px; color: #eceef0; white-space: nowrap; }
                .view button { all: unset; }
                view-cube { position: absolute; right: 14px; top: 13px; }
            </style>
            <svg class="model">
                <!-- model space starts at the canvas corner 85,180 -->
                <g transform="translate(-85 -180)" fill="none">
                    <g stroke="#e6e7e8" transform="translate(0.5 0.5)">
                        <path d="M4000 268H87V444H4000"/>
                        <path stroke-dasharray="3 2" d="M152 268V444M346 268V444M597 268V444M800 268V444M859 268V444M1062 268V444"/>
                    </g>
                    <g stroke="#e8e500" transform="translate(0.5 0.5)">
                        ${line(92, 297, 849)}${line(691, 302, 4000)}
                        ${line(92, 327, 456)}${line(298, 331, 1084)}${line(926, 327, 4000)}
                        ${line(92, 356, 849)}${line(691, 361, 4000)}
                        ${line(92, 386, 456)}${line(926, 386, 4000)}
                        ${line(92, 415, 849)}${line(691, 420, 4000)}
                        ${hooks}
                        <path stroke="#c5c62c" d="M568 540V529H617"/>
                    </g>
                    <g stroke="#fff" transform="translate(0.5 0.5)">
                        ${dim(691, 848, 258)}
                        ${dim(926, 1083, 288)}
                        <path d="M208 334V579H228M270 303V529H290"/>
                        <path d="M100 681V730H151M96 725h9v9h-9z"/>
                    </g>
                    <path fill="#ff00ff" d="M208 327L229 339L226 344L208 334L190 344L188 339zM270 297L281 303L279 306L270 302L262 306L260 303z"/>
                    <text class="tag" x="316" y="542">10HD19,7970</text>
                    <text class="tag" x="253" y="592">8HD19,3970</text>
                    <text x="531" y="537" font-size="21" font-weight="300">(</text>
                    <text x="627" y="537" font-size="21" font-weight="300">)</text>
                    <text class="small" x="546" y="539">270</text>
                    <text class="small" x="580" y="527">7700</text>
                    <text class="axis" x="108" y="676">Y</text>
                    <text class="axis" x="161" y="730">X</text>
                </g>
            </svg>
            <div class="view"><button>[−]</button><button>[평면도]</button><button>[2D 와이어프레임]</button></div>
            <view-cube></view-cube>
        `;
    }
}
customElements.define('drawing-canvas', DrawingCanvas);

class CommandLine extends HTMLElement {
    constructor() {
        super();
        this.attachShadow({ mode: 'open' }).innerHTML = `
            <style>
                :host { display: flex; height: 59px; background: #323946; border-top: 1px solid var(--dark); box-sizing: border-box; }
                .handle { width: 25px; display: flex; flex-direction: column; align-items: center; gap: 7px; padding-top: 4px; box-sizing: border-box; }
                .body { flex: 1; display: flex; flex-direction: column; }
                .log {
                    flex: 1;
                    padding: 4px 3px 0;
                    background: #c8c8c8;
                    border-bottom: 1px solid #333;
                    color: #0c0c0c;
                    font-family: "Liberation Mono", "Noto Sans CJK KR", monospace;
                    white-space: pre;
                }
                .entry { display: flex; align-items: center; height: 20px; background: #fff; padding-left: 4px; gap: 6px; }
                input {
                    flex: 1;
                    border: 0;
                    padding: 0;
                    outline: 0;
                    background: transparent;
                    font: italic 14px/18px "Liberation Mono", "Noto Sans CJK KR", monospace;
                }
                input::placeholder { color: #777; opacity: 1; }
                button { all: unset; }
                svg { display: block; }
            </style>
            <div class="handle">
                <svg width="17" height="5"><path stroke="#c9cdd3" stroke-width="2" stroke-dasharray="2 1" d="M0 1h17M0 4h17"/></svg>
                <button aria-label="닫기"><svg width="10" height="10"><path stroke="#e4e6e9" stroke-width="2" d="M1 1l8 8M9 1l-8 8"/></svg></button>
                <button aria-label="사용자화"><svg width="15" height="24"><path fill="#e4e6e9" transform="translate(0 7)" d="M9 1l2 0l-2 3l2 2l3 -2c1 4 -2 6 -5 5l-6 6l-3 -2l6 -6c-1 -3 1 -6 3 -6z"/></svg></button>
            </div>
            <div class="body">
                <div class="log">명령: *취소*\n명령: *취소*</div>
                <label class="entry">
                    <svg width="28" height="14"><path fill="#fff" stroke="#555" d="M.5 1.5h16v11h-16z"/><path fill="#777" d="M0 1h17v2h-17zM19 5h7l-3.5 4z"/><path fill="none" stroke="#333" d="M3 5l3 2l-3 2M7 10.5h4"/></svg>
                    <input placeholder="명령 입력" aria-label="명령 입력">
                </label>
            </div>
        `;
    }
}
customElements.define('command-line', CommandLine);

class LayoutTab extends HTMLElement {
    constructor() {
        super();
        this.attachShadow({ mode: 'open' }).innerHTML = `
            <style>
                :host { position: relative; display: block; width: 54px; height: 18px; text-align: center; color: #b9bec7; --fill: var(--tab); }
                :host([active]) { width: 49px; color: #fff; font-weight: 500; --fill: var(--panel); }
                :host([add]) { width: 20px; margin-left: 5px; font-size: 18px; }
                svg { position: absolute; inset: 0 -3px; width: calc(100% + 6px); height: 18px; }
                button { all: unset; position: relative; line-height: 17px; }
            </style>
            <svg viewBox="0 0 60 18" preserveAspectRatio="none"><path fill="var(--fill)" d="M0 0H60C55 2 56 18 46 18H14C4 18 5 2 0 0z"/></svg>
            <button role="tab"><slot></slot></button>
        `;
    }
}
customElements.define('layout-tab', LayoutTab);

// Status bar: a name is an icon button, "v" a drop arrow, "-" a gap, "!" marks a switched-on toggle.
class StatusBar extends HTMLElement {
    constructor() {
        super();
        const items = 's-grid s-snap! v - s-ortho! s-polar v s-iso v s-track s-osnap! v - s-ann! s-annauto s-annscale 1:1 v - s-gear v s-plus - - s-iso2 s-hw s-clean - - s-full s-menu';
        const html = items.split(' ').map(item => {
            if (item === '-') return '<i></i>';
            if (item === 'v') return '<button class="drop" aria-label="옵션"><span></span></button>';
            if (item === '1:1') return '<button class="scale">1:1</button>';
            const name = item.replace('!', '');
            return `<button class="${item.endsWith('!') ? 'on' : ''}" aria-label="${name}"><cad-icon name="${name}"></cad-icon></button>`;
        }).join('');
        this.attachShadow({ mode: 'open' }).innerHTML = `
            <style>
                :host { display: flex; margin-top: 2px; font-size: 12px; }
                button { all: unset; display: grid; place-items: center; width: 24px; height: 24px; background: var(--panel); color: #fff; }
                .on { background: var(--active); border-left: 1px solid var(--dark); border-right: 1px solid var(--dark); width: 22px; }
                .name { width: auto; padding: 0 1px; margin-right: 3px; font-weight: 500; }
                .name + .name { font-size: 13px; }
                .scale { width: 18px; }
                .drop { width: 16px; }
                .drop span { border: 4px solid transparent; border-top-color: #d9dce1; border-bottom: 0; }
                i { width: 3px; }
            </style>
            <button class="name">ArchiOffice</button>
            <button class="name">모형</button>
            ${html}
        `;
    }
}
customElements.define('status-bar', StatusBar);
</script>
</body>
</html>
